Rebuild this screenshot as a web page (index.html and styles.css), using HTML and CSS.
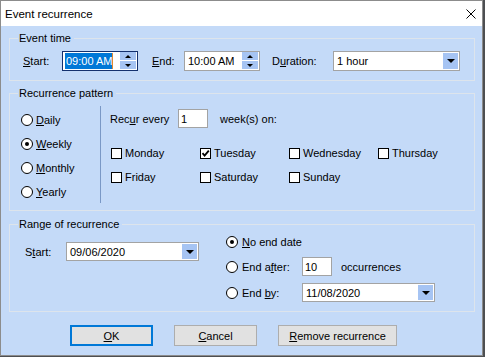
FILE: index.html
```html
<!DOCTYPE html>
<html>
<head>
<meta charset="utf-8">
<link rel="stylesheet" href="styles.css">
</head>
<body>
<div class="window">
  <div class="titlebar">
    <span class="title">Event recurrence</span>
    <svg class="close" viewBox="0 0 10 10"><path d="M0.5 0.5 L9.5 9.5 M9.5 0.5 L0.5 9.5" stroke="#000" stroke-width="1" fill="none"/></svg>
  </div>
  <div class="client">
    <fieldset class="group g-time">
      <legend>Event time</legend>
      <div class="time-row">
        <span class="lbl lbl-start"><u>S</u>tart:</span>
        <div class="spin focused"><span class="val"><span class="sel">09:00 AM</span></span><span class="spin-btns"><span class="sb"><i class="tri-up"></i></span><span class="sb"><i class="tri-down-s"></i></span></span></div>
        <span class="lbl lbl-end"><u>E</u>nd:</span>
        <div class="spin"><span class="val">10:00 AM</span><span class="spin-btns"><span class="sb"><i class="tri-up"></i></span><span class="sb"><i class="tri-down-s"></i></span></span></div>
        <span class="lbl lbl-dur">D<u>u</u>ration:</span>
        <div class="combo combo-dur"><span class="val">1 hour</span><span class="drop"><i class="tri-down"></i></span></div>
      </div>
    </fieldset>

    <fieldset class="group g-pattern">
      <legend>Recurrence pattern</legend>
      <div class="pattern">
        <div class="freq">
          <div class="radio-row"><span class="radio"></span><span class="rlabel"><u>D</u>aily</span></div>
          <div class="radio-row"><span class="radio on"></span><span class="rlabel"><u>W</u>eekly</span></div>
          <div class="radio-row"><span class="radio"></span><span class="rlabel"><u>M</u>onthly</span></div>
          <div class="radio-row"><span class="radio"></span><span class="rlabel"><u>Y</u>early</span></div>
        </div>
        <div class="vsep"></div>
        <div class="weekly">
          <div class="recur-row">
            <span class="recur-label">Rec<u>u</u>r every</span>
            <span class="num">1</span>
            <span class="weeks">week(s) on:</span>
          </div>
          <div class="days">
            <div class="day"><span class="cb"></span><span class="dlabel">Monday</span></div>
            <div class="day"><span class="cb on"><svg viewBox="0 0 9 9"><path d="M1.5 4.2 L3.6 6.6 L7.8 1.6" stroke="#000" stroke-width="1.8" fill="none"/></svg></span><span class="dlabel">Tuesday</span></div>
            <div class="day"><span class="cb"></span><span class="dlabel">Wednesday</span></div>
            <div class="day"><span class="cb"></span><span class="dlabel">Thursday</span></div>
            <div class="day"><span class="cb"></span><span class="dlabel">Friday</span></div>
            <div class="day"><span class="cb"></span><span class="dlabel">Saturday</span></div>
            <div class="day"><span class="cb"></span><span class="dlabel">Sunday</span></div>
          </div>
        </div>
      </div>
    </fieldset>

    <fieldset class="group g-range">
      <legend>Range of recurrence</legend>
      <div class="range">
        <div class="range-start">
          <span class="lbl lbl-rstart">S<u>t</u>art:</span>
          <div class="combo combo-date"><span class="val">09/06/2020</span><span class="drop"><i class="tri-down"></i></span></div>
        </div>
        <div class="ends">
          <div class="end-row"><span class="radio on"></span><span class="elabel"><u>N</u>o end date</span></div>
          <div class="end-row"><span class="radio"></span><span class="elabel fixed">End a<u>f</u>ter:</span><span class="num">10</span><span class="occ">occurrences</span></div>
          <div class="end-row third"><span class="radio"></span><span class="elabel fixed">End <u>b</u>y:</span><div class="combo combo-date"><span class="val">11/08/2020</span><span class="drop"><i class="tri-down"></i></span></div></div>
        </div>
      </div>
    </fieldset>

    <div class="buttons">
      <span class="btn default"><span><u>O</u>K</span></span>
      <span class="btn"><span><u>C</u>ancel</span></span>
      <span class="btn wide"><span><u>R</u>emove recurrence</span></span>
    </div>
  </div>
</div>
</body>
</html>
```

FILE: styles.css
```css
* { box-sizing: border-box; }
html, body { margin: 0; padding: 0; }
body {
  width: 485px;
  height: 357px;
  overflow: hidden;
  background: #4d4f52;
  font-family: "Liberation Sans", Arial, sans-serif;
  color: #000;
}
u { text-decoration: underline; text-underline-offset: 1px; }

.window {
  width: 483px;
  height: 356px;
  border: 1px solid #8c8c8c;
  background: #c4daf8;
  display: flex;
  flex-direction: column;
}
.titlebar {
  height: 25px;
  flex: none;
  background: #fff;
  display: flex;
  align-items: center;
  justify-content: space-between;
  padding: 0 6px 0 4px;
}
.title { font-size: 11.5px; }
.close { width: 10px; height: 10px; display: block; }

.client {
  flex: 1;
  padding-top: 6px;
  font-size: 11px;
}

.group {
  margin: 0 7px 0 8px;
  padding: 0;
  border: 1px solid #dde4ec;
  min-width: 0;
}
.group legend {
  margin-left: 8px;
  padding: 0 3px 0 1px;
  font-size: 11px;
  line-height: 13px;
}
.g-pattern { margin-top: 6px; }
.g-range { margin-top: 7px; }

/* Event time */
.time-row {
  display: flex;
  align-items: center;
  height: 35px;
  padding: 6px 0 9px 13px;
}
.lbl { flex: none; white-space: nowrap; }
.lbl-start { width: 39px; }
.lbl-end { width: 32px; margin-left: 14px; }
.lbl-dur { width: 61px; margin-left: 12px; }

.spin {
  width: 76px;
  height: 20px;
  border: 1px solid #a3a3a3;
  background: #fff;
  display: flex;
  align-items: center;
  padding: 0 1px 0 1px;
  flex: none;
}
.spin.focused { border-color: #14306e; }
.val { padding-left: 2px; white-space: nowrap; }
.spin.focused .val { padding-left: 1px; }
.sel {
  display: inline-block;
  background: #0078d7;
  color: #fff;
  line-height: 16px;
  height: 16px;
  padding-left: 1px;
  border-right: 1px solid #e08a30;
}
.spin-btns {
  margin-left: auto;
  width: 16px;
  height: 18px;
  display: flex;
  flex-direction: column;
  justify-content: space-between;
  padding: 0 0 1px;
}
.sb {
  height: 8px;
  background: #a6c4f3;
  display: flex;
  align-items: center;
  justify-content: center;
}
.tri-up {
  width: 0; height: 0;
  border-left: 3px solid transparent;
  border-right: 3px solid transparent;
  border-bottom: 3px solid #000;
}
.tri-down-s {
  width: 0; height: 0;
  border-left: 3px solid transparent;
  border-right: 3px solid transparent;
  border-top: 3px solid #000;
}
.tri-down {
  width: 0; height: 0;
  border-left: 4px solid transparent;
  border-right: 4px solid transparent;
  border-top: 4px solid #000;
}

.combo {
  height: 20px;
  border: 1px solid #a3a3a3;
  background: #fff;
  display: flex;
  align-items: center;
  padding: 1px;
  flex: none;
}
.combo .val { padding-left: 2px; }
.combo-dur { width: 127px; }
.combo-date { width: 133px; height: 19px; }
.drop {
  margin-left: auto;
  width: 15px;
  height: 100%;
  background: #a6c4f3;
  display: flex;
  align-items: center;
  justify-content: center;
}

/* Recurrence pattern */
.pattern { display: flex; }
.freq {
  width: 90px;
  flex: none;
  padding: 8px 0 6px 11px;
}
.radio-row {
  height: 24px;
  display: flex;
  align-items: center;
}
.radio {
  width: 12px;
  height: 12px;
  flex: none;
  border: 1px solid #000;
  border-radius: 50%;
  background: #fff;
  display: flex;
  align-items: center;
  justify-content: center;
}
.radio.on::after {
  content: "";
  width: 4px;
  height: 4px;
  border-radius: 50%;
  background: #000;
}
.rlabel { margin-left: 3px; }
.vsep {
  width: 1px;
  height: 97px;
  margin-top: 6px;
  background: #7a98c6;
  flex: none;
}
.weekly { padding: 9px 0 0 9px; }
.recur-row {
  display: flex;
  align-items: center;
  height: 19px;
}
.recur-label { width: 68px; flex: none; }
.num {
  width: 30px;
  height: 19px;
  border: 1px solid #a3a3a3;
  background: #fff;
  padding-left: 2px;
  display: flex;
  align-items: center;
  flex: none;
}
.weeks { margin-left: 12px; }
.days {
  display: grid;
  grid-template-columns: repeat(4, 89px);
  grid-auto-rows: 24px;
  margin: 13px 0 0 1px;
}
.day { display: flex; align-items: center; }
.cb {
  width: 11px;
  height: 11px;
  flex: none;
  border: 1px solid #000;
  background: #fff;
  display: flex;
  align-items: center;
  justify-content: center;
}
.cb svg { width: 9px; height: 9px; display: block; }
.dlabel { margin-left: 3px; }

/* Range */
.range { display: flex; }
.range-start {
  display: flex;
  align-items: center;
  align-self: flex-start;
  padding: 11px 0 0 15px;
}
.lbl-rstart { width: 41px; }
.ends {
  margin-left: 27px;
  padding: 1px 0 9px;
  display: flex;
  flex-direction: column;
}
.end-row {
  display: flex;
  align-items: center;
  height: 19px;
}
.end-row + .end-row { margin-top: 6px; }
.end-row.third { margin-top: 7px; }
.elabel { margin-left: 4px; white-space: nowrap; }
.elabel.fixed { width: 60px; flex: none; }
.occ { margin-left: 9px; }

/* Buttons */
.buttons {
  display: flex;
  gap: 21px;
  padding-left: 69px;
  margin-top: 13px;
}
.btn {
  width: 83px;
  height: 21px;
  border: 1px solid #adadad;
  background: #e1e1e1;
  display: flex;
  align-items: center;
  justify-content: center;
  font-size: 11px;
}
.btn.default { border: 2px solid #0078d7; }
.btn.wide { width: 119px; }
```
